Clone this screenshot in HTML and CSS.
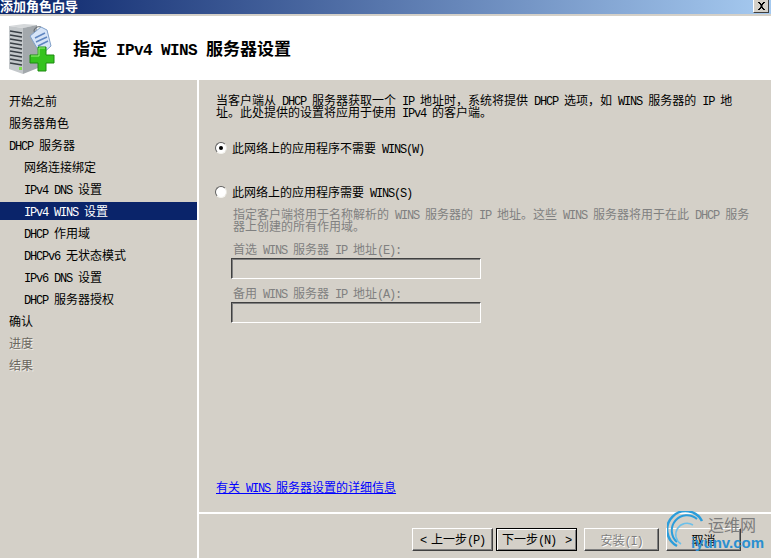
FILE: index.html
```html
<!DOCTYPE html>
<html>
<head>
	<title>添加角色向导</title>
	<link rel="stylesheet" href="styles.css">
</head>
<body>
	<div class="window">
		<div class="titlebar">
			<span class="title">添加角色向导</span>
			<span class="close">
				<svg width="9" height="8" viewBox="0 0 9 8"><path d="M1 0h2v1h1v1h1V1h1V0h2v1H7v1H6v1H5.500v2H6v1h1v1h1v1H6V7H5V6H4v1H3v1H1V7h1V6h1V5h.5V3H3V2H2V1H1z" fill="#000"/></svg>
			</span>
		</div>
		<div class="header">
			<svg class="wizard-icon" width="48" height="52" viewBox="0 0 48 52">
				<path d="M1 4 L16 2 L29 3 L15 6 Z" fill="#d5d8da"/>
				<path d="M15 6 L29 3 L30 46 L15 52 Z" fill="#a3a8ac"/>
				<path d="M1 4 L15 6 L15 52 L1 47 Z" fill="#c4c8cb"/>
				<path d="M2 9 L14 11 M2 13 L14 15 M2 17 L14 19 M2 21 L14 23 M2 25 L14 27 M2 29 L14 31 M2 33 L14 35 M2 37 L14 39 M2 41 L14 43" stroke="#3a4046" stroke-width="1.500"/>
				<rect x="11" y="45" width="3" height="3" fill="#7ee04a"/>
				<path d="M26 8 A6 6 0 0 1 33 5 M26 8 L28 22" fill="none" stroke="#5b6268"/>
				<path d="M22 14 L33 5 L39 8 L43 24 L33 33 Z" fill="#d6e4f7" stroke="#7f9fc8"/>
				<path d="M27 16 L37 11 M28 20 L39 15 M30 24 L40 19" stroke="#5f86c0" stroke-width="1.500"/>
				<path d="M22 33 H30 V25 H38 V33 H46 V41 H38 V49 H30 V41 H22 Z" fill="#35c31e" stroke="#1d8a10"/>
				<path d="M23 34 H31 V26 H37" fill="none" stroke="#9bf07f"/>
			</svg>
			<h1 class="heading">指定<span class="lat-big"> IPv4 WINS </span>服务器设置</h1>
		</div>
		<div class="content">
			<ul class="steps">
				<li class="step">开始之前</li>
				<li class="step">服务器角色</li>
				<li class="step"><span class="lat">DHCP </span>服务器</li>
				<li class="step sub">网络连接绑定</li>
				<li class="step sub"><span class="lat">IPv4 DNS </span>设置</li>
				<li class="step sub current"><span class="lat">IPv4 WINS </span>设置</li>
				<li class="step sub"><span class="lat">DHCP </span>作用域</li>
				<li class="step sub"><span class="lat">DHCPv6 </span>无状态模式</li>
				<li class="step sub"><span class="lat">IPv6 DNS </span>设置</li>
				<li class="step sub"><span class="lat">DHCP </span>服务器授权</li>
				<li class="step">确认</li>
				<li class="step pending">进度</li>
				<li class="step pending">结果</li>
			</ul>
			<div class="main">
				<div class="body">
					<p class="intro">当客户端从<span class="lat"> DHCP </span>服务器获取一个<span class="lat"> IP </span>地址时，系统将提供<span class="lat"> DHCP </span>选项，如<span class="lat"> WINS </span>服务器的<span class="lat"> IP </span>地<br>址。此处提供的设置将应用于使用<span class="lat"> IPv4 </span>的客户端。</p>
					<div class="radio-row first">
						<span class="radio checked"></span>
						<span>此网络上的应用程序不需要<span class="lat"> WINS(W)</span></span>
					</div>
					<div class="radio-row second">
						<span class="radio"></span>
						<span>此网络上的应用程序需要<span class="lat"> WINS(S)</span></span>
					</div>
					<div class="wins-fields">
						<p class="hint">指定客户端将用于名称解析的<span class="lat"> WINS </span>服务器的<span class="lat"> IP </span>地址。这些<span class="lat"> WINS </span>服务器将用于在此<span class="lat"> DHCP </span>服务<br>器上创建的所有作用域。</p>
						<label class="field-label">首选<span class="lat"> WINS </span>服务器<span class="lat"> IP </span>地址<span class="lat">(E):</span></label>
						<div class="field"></div>
						<label class="field-label second-label">备用<span class="lat"> WINS </span>服务器<span class="lat"> IP </span>地址<span class="lat">(A):</span></label>
						<div class="field"></div>
					</div>
					<a class="more" href="#">有关<span class="lat"> WINS </span>服务器设置的详细信息</a>
				</div>
				<div class="footer">
					<button class="btn back"><span class="arrow">&lt;</span>上一步<span class="lat">(P)</span></button>
					<button class="btn next default">下一步<span class="lat">(N)</span><span class="arrow">&gt;</span></button>
					<button class="btn install" disabled>安装<span class="lat">(I)</span></button>
					<button class="btn cancel">取消</button>
				</div>
			</div>
		</div>
		<div class="watermark">
			<svg class="wm-logo" width="40" height="42" viewBox="0 0 40 42">
				<path d="M35 10 A18.500 18.500 0 1 0 10 35" fill="none" stroke="#2b9ddb" stroke-width="2.500"/>
				<path d="M30 8 A14 14 0 0 0 10 31" fill="none" stroke="#2b9ddb" stroke-width="2"/>
				<path d="M26 14 A11 11 0 0 0 14 33" fill="none" stroke="#6cc0ea" stroke-width="1.500"/>
			</svg>
			<span class="wm-name">运维网</span>
			<span class="wm-site">iyunv.com</span>
		</div>
	</div>
</body>
</html>
```

FILE: styles.css
```css
html, body {
	margin: 0;
	padding: 0;
}
body {
	font-family: "Noto Sans CJK SC", "Liberation Mono", sans-serif;
	font-size: 12px;
	line-height: 12px;
	color: #000;
	background-color: #d4d0c8;
}
.window {
	position: relative;
	display: flex;
	flex-direction: column;
	width: 771px;
	height: 558px;
	overflow: hidden;
}
.lat {
	font-family: "Liberation Mono", monospace;
	font-size: 12px;
	line-height: 0;
	letter-spacing: -1.200px;
	white-space: pre;
}
.lat-big {
	font-family: "Liberation Mono", monospace;
	font-size: 16px;
	line-height: 0;
	letter-spacing: -0.600px;
	white-space: pre;
}

/* title bar */
.titlebar {
	display: flex;
	justify-content: space-between;
	height: 14px;
	border-bottom: 2px solid #d4d0c8;
	background: linear-gradient(to right, #0a246a, #a6caf0);
}
.title {
	color: white;
	font-weight: bold;
	font-size: 13px;
	line-height: 12px;
}
.close {
	display: flex;
	justify-content: center;
	align-items: center;
	box-sizing: border-box;
	width: 16px;
	height: 13px;
	margin-right: 2px;
	background-color: #d4d0c8;
	border-right: 1px solid #404040;
	border-bottom: 1px solid #404040;
	border-left: 1px solid white;
}

/* header */
.header {
	display: flex;
	align-items: center;
	height: 64px;
	background-color: white;
}
.wizard-icon {
	margin-left: 8px;
}
.heading {
	margin: 0 0 1px 17px;
	font-size: 17px;
	line-height: 18px;
	font-weight: bold;
}

/* wizard steps */
.content {
	display: flex;
	flex: 1;
	min-height: 0;
}
.steps {
	list-style: none;
	margin: 0;
	padding: 12px 0 0;
	box-sizing: border-box;
	width: 199px;
	border-right: 2px solid white;
}
.step {
	height: 18px;
	line-height: 18px;
	margin-bottom: 4px;
	padding-left: 9px;
	color: #000;
}
.step.sub {
	padding-left: 24px;
}
.step.current {
	color: white;
	background-color: #0a246a;
}
.step.pending {
	color: #6b675e;
	text-shadow: 1px 1px 0 #f0eee8;
}

/* main panel */
.main {
	display: flex;
	flex-direction: column;
	flex: 1;
}
.body {
	display: flex;
	flex-direction: column;
	flex: 1;
	padding: 14px 0 19px 17px;
	border-bottom: 2px solid white;
}
.intro {
	margin: 0;
}
.radio-row {
	display: flex;
	align-items: center;
	gap: 5px;
	height: 12px;
	margin-left: -1px;
}
.radio-row.first {
	margin-top: 24px;
}
.radio-row.second {
	margin-top: 32px;
}
.radio {
	position: relative;
	box-sizing: border-box;
	width: 12px;
	height: 12px;
	border-radius: 50%;
	background-color: white;
	border: 1px solid;
	border-color: #606060 #e8e6e0 #f4f3ef #606060;
}
.radio.checked::after {
	content: "";
	position: absolute;
	left: 3px;
	top: 3px;
	width: 4px;
	height: 4px;
	border-radius: 50%;
	background-color: black;
}
.wins-fields {
	display: flex;
	flex-direction: column;
	align-items: flex-start;
	margin-left: 15px;
	color: #808080;
}
.hint {
	margin: 10px 0 0 2px;
}
.field-label {
	margin: 11px 0 3px 2px;
}
.field-label.second-label {
	margin-top: 8px;
}
.field {
	box-sizing: border-box;
	width: 250px;
	height: 21px;
	border: 1px solid;
	border-color: #404040 white white #404040;
	box-shadow: inset 0 1px 0 #808080, inset 1px 0 0 #808080;
}
.more {
	margin-top: auto;
	color: #0000ff;
	text-decoration: underline;
}

/* bottom buttons */
.footer {
	display: flex;
	justify-content: flex-end;
	align-items: flex-start;
	height: 44px;
	padding: 14px 30px 0 0;
	box-sizing: border-box;
}
.btn {
	box-sizing: border-box;
	height: 23px;
	width: 75px;
	margin-left: 7px;
	padding: 0;
	font-family: inherit;
	font-size: 12px;
	line-height: 12px;
	color: #000;
	background-color: #d4d0c8;
	border: 1px solid;
	border-color: white #404040 #404040 white;
	box-shadow: inset -1px -1px 0 #808080;
}
.btn.back {
	width: 81px;
}
.btn.next {
	width: 81px;
	margin-left: 3px;
}
.btn.default {
	border-color: black;
	box-shadow: inset 1px 1px 0 white, inset -1px -1px 0 #808080;
}
.btn:disabled {
	color: #808080;
	text-shadow: 1px 1px 0 white;
}
.arrow {
	display: inline-block;
	width: 6px;
	font-family: "Liberation Mono", monospace;
}
.back .arrow {
	margin-right: 5px;
}
.next .arrow {
	margin-left: 9px;
}

/* site watermark */
.watermark {
	position: absolute;
	left: 667px;
	top: 511px;
	width: 104px;
	height: 47px;
	pointer-events: none;
}
.wm-logo {
	position: absolute;
	left: 0;
	top: 0;
}
.wm-name {
	position: absolute;
	left: 41px;
	top: 4px;
	font-size: 16px;
	line-height: 18px;
	color: #7c7c7c;
}
.wm-site {
	position: absolute;
	left: 24px;
	top: 22px;
	font-family: "Liberation Sans", sans-serif;
	font-weight: 700;
	font-size: 15px;
	line-height: 20px;
	color: #2b8fd0;
	white-space: nowrap;
}
```
